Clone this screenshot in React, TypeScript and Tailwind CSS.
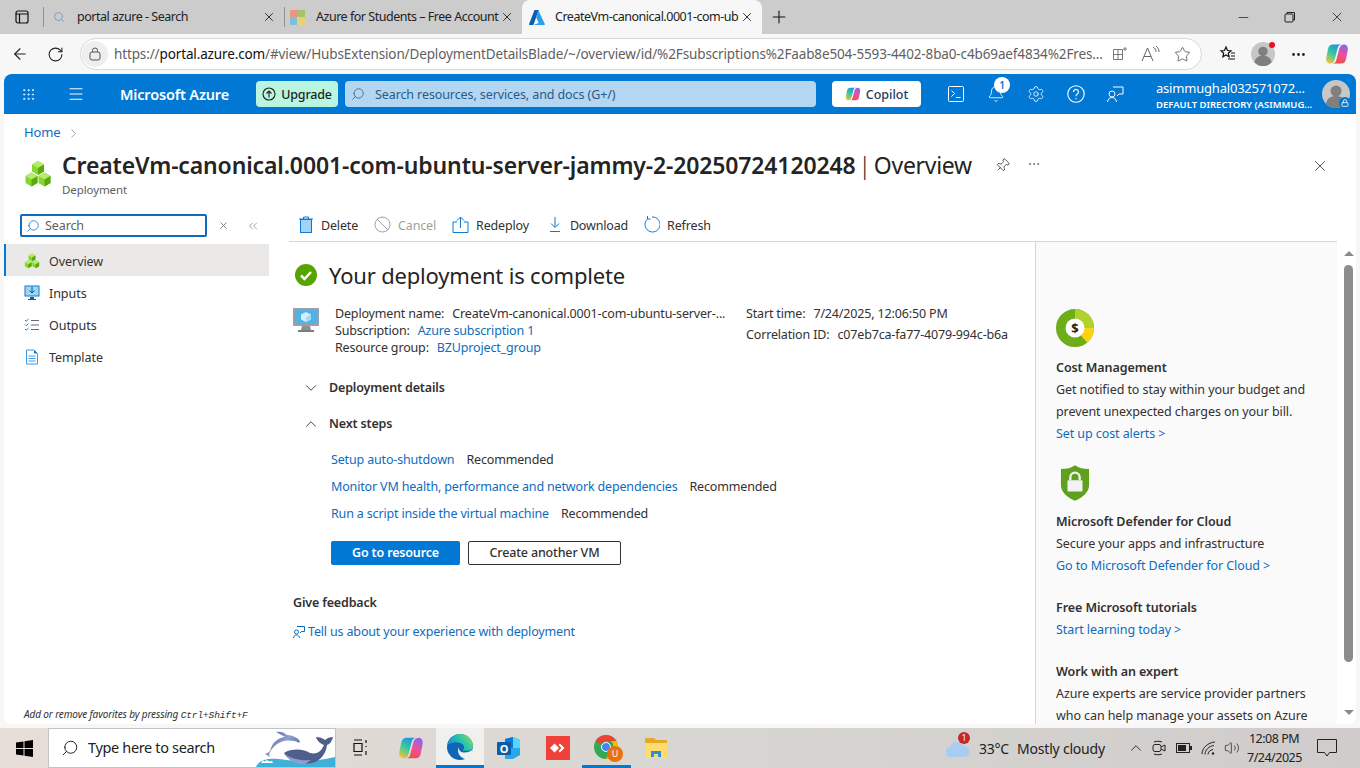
import React from "react";
import {
  ArrowLeft,
  Bell,
  ChevronDown,
  ChevronRight,
  ChevronUp,
  ChevronsLeft,
  Ellipsis,
  Grip,
  Lock,
  Menu,
  Minus,
  Pin,
  Plus,
  RotateCw,
  Search,
  Settings,
  Star,
  Volume2,
  X,
} from "lucide-react";

const FONT = "[font-family:'Noto_Sans',sans-serif]";

// Azure resource cube cluster used for the deployment icon
const Cubes = ({ size }: { size: number }) => (
  <svg width={size} height={size} viewBox="0 0 28 28">
    <path d="M14 1l6 3.500v7L14 15l-6-3.500v-7z" fill="#86d633" />
    <path d="M14 1l6 3.500L14 8 8 4.500z" fill="#b4ec6c" />
    <path d="M14 8l6-3.500v7L14 15z" fill="#5ea80f" />
    <path d="M7.500 12.500l6 3.500v7l-6 3.500-6-3.500v-7z" fill="#86d633" />
    <path d="M7.500 12.500l6 3.500-6 3.500-6-3.500z" fill="#b4ec6c" />
    <path d="M7.500 19.500l6-3.500v7l-6 3.500z" fill="#5ea80f" />
    <path d="M20.500 12.500l6 3.500v7l-6 3.500-6-3.500v-7z" fill="#86d633" />
    <path d="M20.500 12.500l6 3.500-6 3.500-6-3.500z" fill="#b4ec6c" />
    <path d="M20.500 19.500l6-3.500v7l-6 3.500z" fill="#5ea80f" />
  </svg>
);

const AzureLogo = () => (
  <svg width="16" height="15" viewBox="0 0 16 15">
    <path d="M5.500 0h4.200L4.700 14.200a1 1 0 0 1-.9.700H.6a.6.600 0 0 1-.5-.8z" fill="#0a5fb4" />
    <path d="M9.200 0l6.600 14.100a.6.600 0 0 1-.5.800H4.500l5.200-2-2.500-5.500z" fill="#2aa0ea" />
  </svg>
);

const COPILOT_HALF =
  "M7.500 2.500H17c-2.500 0-3.800 1.200-4.300 3.500L10 16.500c-.7 3-2.300 5-5 5-2.700 0-4.200-2.500-3.800-5.500L3 7c.5-3 2.300-4.500 4.500-4.500z";

const CopilotLogo = ({ size }: { size: number }) => (
  <svg width={size} height={size} viewBox="0 0 24 24">
    <defs>
      <linearGradient id="copilot-left" x1="0.700" y1="0" x2="0.200" y2="1">
        <stop offset="0" stopColor="#1f8fe8" />
        <stop offset="0.500" stopColor="#35c9a0" />
        <stop offset="1" stopColor="#f5c23a" />
      </linearGradient>
      <linearGradient id="copilot-right" x1="0.700" y1="0" x2="0.300" y2="1">
        <stop offset="0" stopColor="#f0503c" />
        <stop offset="0.500" stopColor="#ee4f9c" />
        <stop offset="1" stopColor="#8e63e8" />
      </linearGradient>
    </defs>
    <path d={COPILOT_HALF} fill="url(#copilot-left)" />
    <path d={COPILOT_HALF} fill="url(#copilot-right)" transform="rotate(180 12 12)" />
  </svg>
);

const EdgeLogo = () => (
  <svg width="26" height="26" viewBox="0 0 24 24">
    <defs>
      <linearGradient id="edge-top" x1="0" y1="0.700" x2="1" y2="0.200">
        <stop offset="0" stopColor="#0f8fd0" />
        <stop offset="0.600" stopColor="#30c7a8" />
        <stop offset="1" stopColor="#8fdc5c" />
      </linearGradient>
    </defs>
    <circle cx="12" cy="12" r="12" fill="#0f66b8" />
    <path d="M.500 10C2 4 7 0 12.500 0 19 0 24 5 24 11.500c0 2.500-2.500 4-5.500 4H14c2-1 2.300-4 .8-5.500C12 7 5.500 6.500.5 10z" fill="url(#edge-top)" />
    <path d="M24 13c-1 3-5 4.500-9 4-3-.5-4.500-2.500-4-5-1.500 3-1 6.500 2 9 1.500 1.200 3.500 2.500 5.500 2.500 3-1.500 5.500-6 5.500-10.500z" fill="#f0f0ee" />
  </svg>
);

const Avatar = ({ size }: { size: number }) => (
  <svg width={size} height={size} viewBox="0 0 28 28">
    <circle cx="14" cy="14" r="14" fill="#c7c7c7" />
    <circle cx="14" cy="11" r="5.500" fill="#7f7f7f" />
    <path d="M4 24c1-6 5-8 10-8s9 2 10 8a14 14 0 0 1-20 0z" fill="#7f7f7f" />
  </svg>
);

const BrowserTab = ({
  icon,
  title,
  active,
  width,
  iconBox,
}: {
  icon: React.ReactNode;
  title: string;
  active?: boolean;
  width: string;
  iconBox: string;
}) => (
  <div
    className={`flex items-center h-[34px] shrink-0 ${width} ${
      active ? "bg-[#f7f7f7] rounded-t-lg" : ""
    }`}
  >
    <span className={`flex justify-center shrink-0 ${iconBox}`}>{icon}</span>
    <span className="flex-1 min-w-0 whitespace-nowrap text-[12.500px] text-[#222] tracking-[-0.48px]">
      {title}
    </span>
    <X size={14} strokeWidth={1.600} className="ml-[2px] mr-[8px] text-[#222] shrink-0" />
  </div>
);

const NavItem = ({
  icon,
  label,
  selected,
}: {
  icon: React.ReactNode;
  label: string;
  selected?: boolean;
}) => (
  <div
    className={`flex items-center h-[32px] text-[12.500px] text-[#323130] tracking-[-0.05px] ${
      selected ? "bg-[#ebe9e7] border-l-2 border-[#0078d4] pl-[18px]" : "pl-[20px]"
    }`}
  >
    <span className="w-[25px] flex shrink-0 pt-[2px]">{icon}</span>
    <span className="pt-[4px]">{label}</span>
  </div>
);

const ToolButton = ({
  icon,
  label,
  disabled,
  className,
}: {
  icon: React.ReactNode;
  label: string;
  disabled?: boolean;
  className?: string;
}) => (
  <div
    className={`flex items-center gap-[7px] text-[12.500px] tracking-[-0.16px] ${
      disabled ? "text-[#a19f9d]" : "text-[#323130]"
    } ${className ?? ""}`}
  >
    {icon}
    <span className="pt-[4px]">{label}</span>
  </div>
);

const Link = ({ children }: { children: React.ReactNode }) => (
  <span className="text-[#0f6cbd]">{children}</span>
);

const NextStep = ({ label }: { label: string }) => (
  <div className="flex h-[27px] items-center gap-3">
    <Link>{label}</Link>
    <span className="text-[#323130]">Recommended</span>
  </div>
);

const Promo = ({
  title,
  lines,
  link,
  className,
}: {
  title: string;
  lines: string[];
  link?: string;
  className?: string;
}) => (
  <div className={`leading-[22px] ${className ?? ""}`}>
    <div className="font-semibold text-[#323130]">{title}</div>
    {lines.map((line) => (
      <div key={line} className="text-[#323130] whitespace-nowrap">
        {line}
      </div>
    ))}
    {link && <Link>{link}</Link>}
  </div>
);

const BrowserChrome = () => (
  <>
    <div className="flex h-[34px] bg-[#cccccc] items-center">
      <div className="w-[44px] flex items-center justify-center border-r border-[#8f8f8f] h-[20px] shrink-0">
        <svg width="14" height="14" viewBox="0 0 14 14" fill="none" stroke="#111" strokeWidth="1.200">
          <rect x="1" y="1" width="12" height="12" rx="2" />
          <path d="M1 4h12M4.500 4v9" />
        </svg>
      </div>
      <BrowserTab
        width="w-[240px]"
        iconBox="w-[30px] mr-[3px]"
        title="portal azure - Search"
        icon={<Search size={12} className="text-[#7f9fc0]" />}
      />
      <div className="w-px h-[20px] bg-[#8f8f8f] shrink-0" />
      <BrowserTab
        width="w-[237px]"
        iconBox="w-[24px] mr-[7px]"
        title="Azure for Students – Free Account"
        icon={
          <span className="grid grid-cols-2 w-[15px] h-[15px]">
            <i className="bg-[#e8967e]" />
            <i className="bg-[#a5c46a]" />
            <i className="bg-[#7fc0e0]" />
            <i className="bg-[#e8d078]" />
          </span>
        }
      />
      <BrowserTab
        width="w-[240px]"
        iconBox="w-[30px] mr-[3px]"
        active
        title="CreateVm-canonical.0001-com-ub"
        icon={<AzureLogo />}
      />
      <Plus size={20} strokeWidth={1.300} className="ml-[7px] text-[#111]" />
      <div className="ml-auto flex items-center gap-[33px] pr-[15px] text-[#222]">
        <Minus size={15} strokeWidth={1.200} />
        <svg width="12" height="12" viewBox="0 0 12 12" fill="none" stroke="#222">
          <rect x="1" y="3" width="8" height="8" rx="1" />
          <path d="M3 3V1.500h7.500V9H9" />
        </svg>
        <X size={16} strokeWidth={1.200} />
      </div>
    </div>
    <div className="flex h-[40px] bg-[#f7f7f7] items-center">
      <ArrowLeft size={18} strokeWidth={1.500} className="ml-[11px] text-[#222]" />
      <RotateCw size={17} strokeWidth={1.500} className="ml-[18px] text-[#222]" />
      <div className="ml-[16px] w-[1122px] h-[32px] rounded-full bg-white border border-[#d8d8d8] flex items-center">
        <span className="w-[26px] h-[26px] ml-[1px] rounded-full bg-[#eeeeee] flex items-center justify-center">
          <svg width="12" height="14" viewBox="0 0 12 14" fill="none" stroke="#555">
            <rect x="1" y="5" width="10" height="8" rx="2" />
            <path d="M3.500 5V3.500a2.500 2.500 0 0 1 5 0V5" />
          </svg>
        </span>
        <span className="ml-[6px] text-[13.500px] tracking-[-0.13px] text-[#5f5f5f] whitespace-nowrap">
          https://<span className="text-[#111]">portal.azure.com</span>
          /#view/HubsExtension/DeploymentDetailsBlade/~/overview/id/%2Fsubscriptions%2Faab8e504-5593-4402-8ba0-c4b69aef4834%2Fres...
        </span>
        <div className="ml-auto flex items-center gap-[13px] pr-[10px] text-[#555]">
          <svg width="16" height="16" viewBox="0 0 16 16" fill="none" stroke="#777">
            <path d="M1.500 3.500h9v10h-9zM1.500 8.500h9M6 3.500v10M13 1v4M11 3h4" />
          </svg>
          <svg width="20" height="16" viewBox="0 0 20 16" fill="none" stroke="#666">
            <path d="M1 15L6.500 2 12 15M3 10.500h7M12 1c2 1 3 3 3 5M15 0c2 1.500 3 3.500 3 6" />
          </svg>
          <Star size={17} strokeWidth={1.200} />
        </div>
      </div>
      <svg className="ml-[17px]" width="18" height="18" viewBox="0 0 18 18" fill="none" stroke="#111" strokeWidth="1.200">
        <path d="M7 2l1.500 3.500 3.500.3-2.700 2.400.8 3.600L7 10l-3.100 1.800.8-3.600L2 5.800l3.500-.3zM12 8h4M12 11h4M9 14h7" />
      </svg>
      <span className="relative ml-[14px]">
        <Avatar size={24} />
        <span className="absolute top-0 right-0 w-[6px] h-[6px] rounded-full bg-[#e81123]" />
      </span>
      <Ellipsis size={17} className="ml-[15px] text-[#222]" />
      <span className="ml-[18px]">
        <CopilotLogo size={24} />
      </span>
    </div>
  </>
);

const PortalHeader = () => (
  <div className="flex h-[40px] bg-[#0078d4] items-center text-white rounded-t-lg">
    <Grip size={15} strokeWidth={1.300} className="ml-[17px]" />
    <Menu size={18} strokeWidth={1.300} className="ml-[31px]" />
    <span className="ml-[35px] w-[136px] pt-[2px] text-[14.500px] font-semibold tracking-[-0.16px] whitespace-nowrap">
      Microsoft Azure
    </span>
    <div className="h-[26px] w-[82px] bg-[#b9f5df] rounded-sm text-[#1f1f1f] flex items-center justify-center gap-[5px] text-[12.500px] font-medium tracking-[-0.2px]">
      <svg width="14" height="14" viewBox="0 0 14 14" fill="none" stroke="#1f1f1f" strokeWidth="1.100">
        <circle cx="7" cy="7" r="6" />
        <path d="M7 10.500V4M4.500 6.500L7 4l2.500 2.500" />
      </svg>
      <span className="pt-[2px]">Upgrade</span>
    </div>
    <div className="ml-[7px] h-[26px] w-[471px] bg-[#b3d6f2] rounded-sm flex items-center text-[#2b5a84] text-[12.500px] tracking-[-0.1px]">
      <Search size={14} strokeWidth={1.300} className="ml-[6px] mr-[10px] -scale-x-100" />
      <span className="pt-[2px]">Search resources, services, and docs (G+/)</span>
    </div>
    <div className="ml-[16px] h-[26px] w-[89px] bg-white rounded-sm flex items-center justify-center gap-[5px] text-[#243a5e] text-[12.500px] font-medium">
      <CopilotLogo size={16} />
      <span className="pt-[2px]">Copilot</span>
    </div>
    <svg className="ml-[27px]" width="16" height="16" viewBox="0 0 16 16" fill="none" stroke="#fff">
      <rect x="0.500" y="0.500" width="15" height="15" rx="1" />
      <path d="M3.500 4.500l3 3-3 3M8 11.500h4.500" />
    </svg>
    <span className="relative ml-[23px] flex">
      <Bell size={18} strokeWidth={1.100} />
      <span className="absolute -top-[8px] left-[7px] w-[16px] h-[16px] rounded-full bg-white text-[#0078d4] text-[10px] font-semibold flex items-center justify-center">
        1
      </span>
    </span>
    <Settings size={18} strokeWidth={1.100} className="ml-[22px]" />
    <svg className="ml-[22px]" width="18" height="18" viewBox="0 0 16 16" fill="none" stroke="#fff">
      <circle cx="8" cy="8" r="7.300" />
      <path d="M5.800 6.200a2.200 2.200 0 1 1 3.400 1.800c-.8.500-1.200 1-1.200 2M8 11.500v1.200" />
    </svg>
    <svg className="ml-[22px]" width="17" height="17" viewBox="0 0 17 17" fill="none" stroke="#fff">
      <circle cx="5" cy="8" r="3" />
      <path d="M.500 16c.500-3 2-4.500 4.500-4.500S9 13 9.500 16M6 1h10v7h-4l-2 2" />
    </svg>
    <div className="ml-[32px] w-[166px] leading-none pt-[3px]">
      <div className="text-[13px] tracking-[-0.2px] whitespace-nowrap">asimmughal032571072...</div>
      <div className="mt-[5px] text-[9.500px] font-semibold tracking-[0px] whitespace-nowrap">
        DEFAULT DIRECTORY (ASIMMUG...
      </div>
    </div>
    <span className="relative">
      <Avatar size={28} />
      <span className="absolute -right-[1px] -bottom-[1px] w-[12px] h-[12px] rounded-full bg-[#0078d4] flex items-center justify-center">
        <Lock size={8} strokeWidth={2.500} />
      </span>
    </span>
  </div>
);

const Sidebar = () => (
  <div className="w-[265px] shrink-0 flex flex-col pt-[6px] h-[516px]">
    <div className="flex items-center pl-[16px]">
      <div className="w-[187px] h-[23px] border-2 border-[#0f6cbd] rounded-[2px] flex items-center text-[12.500px] text-[#605e5c] tracking-[-0.1px]">
        <Search size={14} strokeWidth={1.300} className="ml-[4px] mr-[5px] -scale-x-100 text-[#0f6cbd]" />
        <span className="pt-[2px]">Search</span>
      </div>
      <X size={11} className="ml-[11px] text-[#777]" />
      <ChevronsLeft size={14} strokeWidth={1.200} className="ml-[17px] text-[#777]" />
    </div>
    <div className="mt-[7px] flex flex-col">
      <NavItem selected label="Overview" icon={<Cubes size={16} />} />
      <NavItem
        label="Inputs"
        icon={
          <svg width="16" height="16" viewBox="0 0 16 16">
            <rect x="1" y="1" width="14" height="10" fill="#9fd4f5" stroke="#0f78d4" />
            <path d="M8 2v6M5.500 5.500L8 8l2.500-2.500" fill="none" stroke="#005ba1" />
            <path d="M6 12h4v2h2v1H4v-1h2z" fill="#0f5f9e" />
          </svg>
        }
      />
      <NavItem
        label="Outputs"
        icon={
          <svg width="16" height="16" viewBox="0 0 16 16" fill="none" stroke="#5f6b76">
            <path d="M7 3.500h8M7 8h8M7 12.500h8" />
            <path d="M1 3l1.200 1.200L4.500 2M1 7.500l1.200 1.200L4.500 6.500M1 12l1.200 1.200L4.500 11" stroke="#0f78d4" />
          </svg>
        }
      />
      <NavItem
        label="Template"
        icon={
          <svg width="16" height="16" viewBox="0 0 16 16">
            <path d="M2.500 1h7.500l3.500 3.500V15h-11z" fill="#fff" stroke="#3b9ae1" />
            <path d="M10 1l3.500 3.500H10z" fill="#0f78d4" />
            <path d="M4.500 7h7M4.500 9.500h7M4.500 12h7" stroke="#3b9ae1" />
          </svg>
        }
      />
    </div>
    <div className="mt-auto pb-[1px] pl-[20px] text-[10px] italic text-[#323130] tracking-[-0.12px] whitespace-nowrap">
      Add or remove favorites by pressing{" "}
      <span className="[font-family:'Liberation_Mono',monospace] text-[9.500px]">Ctrl+Shift+F</span>
    </div>
  </div>
);

const Toolbar = () => (
  <div className="flex items-center gap-[16px] h-[34px] mr-[19px] border-b border-[#d6d6d6] pl-[9px]">
    <ToolButton
      label="Delete"
      icon={
        <svg width="16" height="18" viewBox="0 0 16 18">
          <path d="M1 3h14M5.500 3V1h5v2" fill="none" stroke="#0f78d4" />
          <rect x="2.500" y="3.500" width="11" height="13" fill="#9fd4f5" stroke="#0f78d4" />
        </svg>
      }
    />
    <ToolButton
      disabled
      label="Cancel"
      icon={
        <svg width="17" height="17" viewBox="0 0 17 17" fill="none" stroke="#a19f9d">
          <circle cx="8.500" cy="8.500" r="7.500" />
          <path d="M3.300 3.300l10.400 10.400" />
        </svg>
      }
    />
    <ToolButton
      label="Redeploy"
      icon={
        <svg width="17" height="17" viewBox="0 0 17 17" fill="none" stroke="#0f78d4">
          <path d="M5 6H1v10.500h15V6h-4M8.500 12V1M5 4.500L8.500 1 12 4.500" />
        </svg>
      }
    />
    <ToolButton
      className="ml-[2px]"
      label="Download"
      icon={
        <svg width="16" height="17" viewBox="0 0 16 17" fill="none" stroke="#0f78d4">
          <path d="M8 1v10M4 7.500L8 11.500l4-4M3 15.500h10" />
        </svg>
      }
    />
    <ToolButton
      className="-ml-[1px]"
      label="Refresh"
      icon={
        <svg width="17" height="17" viewBox="0 0 17 17" fill="none" stroke="#0f78d4">
          <path d="M5 2.500a7.500 7.500 0 1 0 4-1.500M4.500 0v3h3" />
        </svg>
      }
    />
  </div>
);

const DeploymentPane = () => (
  <div className="w-[747px] shrink-0 border-r border-[#d6d6d6] pl-[4px] text-[12.500px] tracking-[-0.16px] text-[#323130]">
    <div className="flex items-center mt-[17px] h-[32px]">
      <svg className="ml-[2px]" width="22" height="22" viewBox="0 0 22 22">
        <circle cx="11" cy="11" r="11" fill="#57a300" />
        <path d="M6 11.500l3.500 3.500L16 8" fill="none" stroke="#fff" strokeWidth="2.500" />
      </svg>
      <span className="ml-[12px] text-[22px] tracking-[-0.18px] text-[#252423]">Your deployment is complete</span>
    </div>
    <div className="flex mt-[12px] h-[54px]">
      <svg className="mt-[5px]" width="26" height="25" viewBox="0 0 26 25">
        <rect width="26" height="18" rx="1" fill="#9aa0a6" />
        <rect x="2" y="2" width="22" height="14" fill="#4fb3e8" />
        <path d="M13 4l5 2.500v5L13 14l-5-2.500v-5z" fill="#d5eefb" />
        <path d="M13 9l5-2.500v5L13 14z" fill="#a8d9f2" />
        <path d="M9 18h8l1 4H8z" fill="#8a8f94" />
        <rect x="5" y="22" width="16" height="2" fill="#7d7d7d" />
      </svg>
      <div className="ml-[16px] w-[411px] pt-[2px] leading-[17px]">
        <div className="flex gap-[8px] whitespace-nowrap">
          Deployment name:
          <span>CreateVm-canonical.0001-com-ubuntu-server-...</span>
        </div>
        <div className="flex gap-[8px]">
          Subscription:
          <Link>Azure subscription 1</Link>
        </div>
        <div className="flex gap-[8px]">
          Resource group:
          <Link>BZUproject_group</Link>
        </div>
      </div>
      <div className="leading-[21px] w-[265px] whitespace-nowrap">
        <div className="flex gap-[8px]">
          Start time:
          <span>7/24/2025, 12:06:50 PM</span>
        </div>
        <div className="flex gap-[8px]">
          Correlation ID:
          <span>c07eb7ca-fa77-4079-994c-b6a</span>
        </div>
      </div>
    </div>
    <div className="flex items-center h-[36px] mt-[13px] font-semibold">
      <ChevronDown size={18} strokeWidth={1.200} className="ml-[9px] mr-[9px]" />
      Deployment details
    </div>
    <div className="flex items-center h-[36px] font-semibold">
      <ChevronUp size={18} strokeWidth={1.200} className="ml-[9px] mr-[9px]" />
      Next steps
    </div>
    <div className="ml-[38px] mt-[5px]">
      <NextStep label="Setup auto-shutdown" />
      <NextStep label="Monitor VM health, performance and network dependencies" />
      <NextStep label="Run a script inside the virtual machine" />
      <div className="flex gap-[8px] mt-[13px]">
        <div className="w-[129px] h-[24px] bg-[#0078d4] text-white font-semibold rounded-[2px] flex items-center justify-center">
          Go to resource
        </div>
        <div className="w-[153px] h-[24px] bg-white border border-[#323130] rounded-[2px] flex items-center justify-center font-medium">
          Create another VM
        </div>
      </div>
    </div>
    <div className="mt-[29px] font-semibold">Give feedback</div>
    <div className="mt-[10px] flex items-center gap-[3px]">
      <svg width="12" height="13" viewBox="0 0 12 13" fill="none" stroke="#0f6cbd">
        <circle cx="3.500" cy="6" r="2" />
        <path d="M.500 12c.300-2 1.500-3 3-3s2.700 1 3 3M4 .500h7.500v5h-3L7 7" />
      </svg>
      <Link>Tell us about your experience with deployment</Link>
    </div>
  </div>
);

const PromoPane = () => (
  <div className="w-[301px] shrink-0 bg-[#fafafa] pl-[20px] pt-[67px] text-[12.500px] tracking-[-0.08px] overflow-hidden">
    <svg width="38" height="38" viewBox="0 0 38 38">
      <circle cx="19" cy="19" r="14" fill="none" stroke="#6cad18" strokeWidth="10" />
      <path d="M19 5a14 14 0 0 1 14 14" fill="none" stroke="#aed22e" strokeWidth="10" />
      <path d="M33 19a14 14 0 0 1-5 11" fill="none" stroke="#ffd116" strokeWidth="10" />
      <circle cx="19" cy="19" r="9.500" fill="#fff" />
      <text x="19" y="24" textAnchor="middle" fontSize="13" fontWeight="700" fill="#222">$</text>
    </svg>
    <Promo
      className="mt-[10px]"
      title="Cost Management"
      lines={["Get notified to stay within your budget and", "prevent unexpected charges on your bill."]}
      link="Set up cost alerts >"
    />
    <svg className="ml-[4px] mt-[20px]" width="30" height="36" viewBox="0 0 32 38">
      <path d="M16 0c4 3 9 4 15 4v17c0 8-7 13-15 17C8 34 1 29 1 21V4c6 0 11-1 15-4z" fill="#5fa01f" />
      <rect x="8" y="16" width="16" height="12" rx="1" fill="#f2f2f2" />
      <path d="M11 16v-3a5 5 0 0 1 10 0v3" fill="none" stroke="#f2f2f2" strokeWidth="2.500" />
    </svg>
    <Promo
      className="mt-[10px]"
      title="Microsoft Defender for Cloud"
      lines={["Secure your apps and infrastructure"]}
      link="Go to Microsoft Defender for Cloud >"
    />
    <Promo className="mt-[20px]" title="Free Microsoft tutorials" lines={[]} link="Start learning today >" />
    <Promo
      className="mt-[20px]"
      title="Work with an expert"
      lines={["Azure experts are service provider partners", "who can help manage your assets on Azure"]}
    />
  </div>
);

const Scrollbar = () => (
  <div className="w-[19px] shrink-0 flex flex-col items-center bg-white pl-[4px]">
    <span className="mt-[9px] w-0 h-0 border-x-[5px] border-x-transparent border-b-[5px] border-b-[#8a8a8a]" />
    <div className="mt-[9px] w-[9px] h-[397px] rounded-full bg-[#8c8c8c]" />
    <span className="mt-auto mb-[9px] w-0 h-0 border-x-[5px] border-x-transparent border-t-[5px] border-t-[#8a8a8a]" />
  </div>
);

const Taskbar = () => (
  <div className="h-[40px] flex items-center bg-gradient-to-r from-[#e8ded8] via-[#d8d6d2] to-[#cfcccb]">
    <div className="w-[48px] flex justify-center">
      <svg width="17" height="17" viewBox="0 0 17 17" fill="#000">
        <path d="M0 2.500l7.500-1V8H0zM8.500 1.300L17 0v8H8.500zM0 9h7.500v6.500L0 14.500zM8.500 9H17v8l-8.500-1.200z" />
      </svg>
    </div>
    <div className="w-[288px] h-[40px] bg-white border border-[#c4c4c4] flex items-center relative overflow-hidden">
      <Search size={18} strokeWidth={1.200} className="ml-[12px] -scale-x-100 text-[#111]" />
      <span className="ml-[9px] text-[14.500px] tracking-[-0.35px] text-[#222]">Type here to search</span>
      <svg className="absolute right-0 bottom-0" width="86" height="40" viewBox="0 0 86 40">
        <defs>
          <linearGradient id="dolphin" x1="0" y1="0" x2="1" y2="0.600">
            <stop offset="0" stopColor="#4f628f" />
            <stop offset="0.600" stopColor="#8e9fd0" />
            <stop offset="1" stopColor="#5f70a0" />
          </linearGradient>
        </defs>
        <path d="M7 40C10 33 18 31 30 32c16 2 30 4 56-2v10z" fill="#3fb0d8" />
        <path d="M12 36l2-2.500 2 1 2-1.500 2 1.500 3-.5 1 2z" fill="#fff" />
        <path
          d="M16 27c3-1 4-2 5-3 2-8 7-13 15-14l-9-5c4-1 8 0 11 3 5 0 11 3 13 6l-1 2c-5-3-12-3-18-1-5 2-9 6-11 10-1 2-1 3 0 5z"
          fill="url(#dolphin)"
        />
        <path
          d="M35 26c8-5 20-4 26 0 8 2 12-3 14-8-3-1-7-4-8-8 3 0 7 1 9 3 2-2 5-3 8-3-1 4-3 7-6 8-1 8-6 16-15 18-10 2-22 0-28-10z"
          fill="#4f5f8c"
        />
        <path d="M36 27c6 5 16 7 26 6l-6 4c-8 1-16-3-20-10z" fill="#8e9fd0" />
      </svg>
    </div>
    <div className="w-[50px] flex justify-center">
      <svg width="18" height="18" viewBox="0 0 18 18" fill="none" stroke="#111" strokeWidth="1.200">
        <path d="M2 1h8M2 4.500h8v8H2zM2 16h8M14 1v3M14 7v1M14 12v4" />
      </svg>
    </div>
    <div className="w-[50px] flex justify-center"><CopilotLogo size={26} /></div>
    <div className="w-[48px] h-[40px] flex items-center justify-center bg-[#f0f0ee] border-b-[3px] border-[#0078d4]">
      <EdgeLogo />
    </div>
    <div className="w-[49px] flex justify-center">
      <svg width="24" height="24" viewBox="0 0 24 24">
        <path d="M8 3l8-2 7 3v15l-7 4H8z" fill="#28a8ea" />
        <path d="M8 3l8-2v11H8z" fill="#0f78d4" />
        <path d="M16 1l7 3v8h-7z" fill="#50d9ff" />
        <rect x="0" y="6" width="14" height="13" rx="1" fill="#0a5fa8" />
        <text x="7" y="16.500" textAnchor="middle" fontSize="11" fontWeight="700" fill="#fff">O</text>
      </svg>
    </div>
    <div className="w-[49px] flex justify-center">
      <svg width="24" height="24" viewBox="0 0 24 24">
        <rect width="24" height="24" fill="#f0403a" />
        <path d="M8.500 7.500L4 12l4.500 4.500L13 12zM14 7.500l-1.500 1.500 3 3-3 3 1.500 1.500 4.500-4.500z" fill="#fff" />
      </svg>
    </div>
    <div className="w-[49px] h-[40px] flex items-center justify-center border-b-[3px] border-[#0078d4]">
      <span className="relative flex -ml-[1px]">
        <svg width="24" height="24" viewBox="0 0 24 24">
          <circle cx="12" cy="12" r="12" fill="#34a853" />
          <path d="M12 0a12 12 0 0 1 10.400 6H12a6 6 0 0 0-5.200 3L1.600 6A12 12 0 0 1 12 0z" fill="#ea4335" />
          <path d="M22.400 6A12 12 0 0 1 12 24l5.200-9a6 6 0 0 0 0-9z" fill="#fbbc04" />
          <circle cx="12" cy="12" r="4.500" fill="#4285f4" stroke="#fff" />
        </svg>
        <span className="absolute -right-[5px] -bottom-[3px] w-[16px] h-[16px] rounded-full bg-[#e8710a] text-white text-[9px] flex items-center justify-center">
          U
        </span>
      </span>
    </div>
    <div className="w-[49px] flex justify-center">
      <svg width="22" height="22" viewBox="0 0 22 22">
        <path d="M0 1h9l2 2h11v18H0z" fill="#e8a82a" />
        <path d="M0 6h22v15H0z" fill="#ffdc6b" />
        <path d="M6 20v-6h10v6h-3v-3H9v3z" fill="#2c8fd8" />
      </svg>
    </div>
    <div className="ml-auto flex items-center text-[14px] tracking-[-0.2px] text-[#222]">
      <span className="relative flex mr-[9px]">
        <svg width="24" height="18" viewBox="0 0 24 18">
          <path d="M5 18a5 5 0 0 1-1-10 7 7 0 0 1 13-1 5.500 5.500 0 0 1 2 11z" fill="#a9cdf0" />
        </svg>
        <span className="absolute -top-[7px] right-0 w-[12px] h-[12px] rounded-full bg-[#c4262e] text-white text-[8px] flex items-center justify-center">
          1
        </span>
      </span>
      <span>33°C</span>
      <span className="ml-[8px] w-[110px]">Mostly cloudy</span>
      <ChevronUp size={18} strokeWidth={1.200} />
      <svg className="ml-[7px]" width="14" height="16" viewBox="0 0 14 16" fill="none" stroke="#222">
        <path d="M2 2c3-1 5-1 8 0M2 14c3 1 5 1 8 0" />
        <rect x="1" y="4.500" width="8" height="7" rx="2" />
        <path d="M9 7l4-2v6l-4-2" />
      </svg>
      <svg className="ml-[10px]" width="16" height="10" viewBox="0 0 16 10">
        <rect x="0.500" y="0.500" width="13" height="9" fill="none" stroke="#222" />
        <rect x="2" y="2" width="8" height="6" fill="#222" />
        <rect x="14" y="3" width="2" height="4" fill="#222" />
      </svg>
      <svg className="ml-[9px]" width="15" height="15" viewBox="0 0 15 15" fill="none" stroke="#222">
        <path d="M1 13C1 7 7 1.500 14 1M4 13.500C4 9 8 5 13 4.500M7 13.500c0-2.500 2-4.500 5-5" />
        <circle cx="12" cy="12.500" r="1.200" fill="#222" stroke="none" />
      </svg>
      <Volume2 size={16} strokeWidth={1.100} className="ml-[8px] text-[#222]" />
      <div className="ml-[7px] w-[54px] text-[12.500px] text-center leading-[19px] tracking-[-0.5px]">
        <div>12:08 PM</div>
        <div>7/24/2025</div>
      </div>
      <svg className="ml-[16px] mr-[23px]" width="20" height="18" viewBox="0 0 20 18" fill="none" stroke="#222">
        <path d="M.500.500h19v13h-7L10 17l-2.500-3.500h-7z" />
      </svg>
    </div>
  </div>
);

const App: React.FC = () => {
  return (
    <div className={`h-[768px] w-[1360px] overflow-hidden bg-[#f7f7f7] ${FONT}`}>
      <BrowserChrome />
      <div className="px-[4px] pb-[4px]">
        <PortalHeader />
        <div className="bg-white h-[610px] rounded-b-lg overflow-hidden">
          <div className="h-[36px] pl-[20px] pt-[2px] flex items-center gap-[5px] text-[13px] tracking-[-0.1px] text-[#0f6cbd]">
            Home
            <ChevronRight size={15} strokeWidth={1.100} className="text-[#777]" />
          </div>
          <div className="flex pl-[20px] h-[58px]">
            <span className="mt-[10px]"><Cubes size={28} /></span>
            <div className="ml-[10px]">
              <div className="h-[31px] text-[23px] leading-[30px] text-[#252423] whitespace-nowrap tracking-[-0.14px] flex">
                <span className="font-semibold">
                  CreateVm-canonical.0001-com-ubuntu-server-jammy-2-20250724120248
                </span>
                <span className="ml-[3px] mr-[3px] font-light">|</span>
                <span className="tracking-[-0.3px]">Overview</span>
                <Pin size={15} strokeWidth={1.200} className="ml-[23px] mt-[8px] rotate-45" />
                <Ellipsis size={14} strokeWidth={1.200} className="ml-[17px] mt-[7px] text-[#555]" />
              </div>
              <div className="text-[11.500px] text-[#605e5c] tracking-[-0.1px]">Deployment</div>
            </div>
            <X size={18} strokeWidth={1.100} className="ml-auto mr-[27px] mt-[7px] text-[#323130]" />
          </div>
          <div className="flex h-[516px]">
            <Sidebar />
            <div className="ml-[20px] flex-1 flex flex-col min-w-0">
              <Toolbar />
              <div className="flex flex-1 min-h-0">
                <DeploymentPane />
                <PromoPane />
                <Scrollbar />
              </div>
            </div>
          </div>
        </div>
      </div>
      <Taskbar />
    </div>
  );
};

export default App;
